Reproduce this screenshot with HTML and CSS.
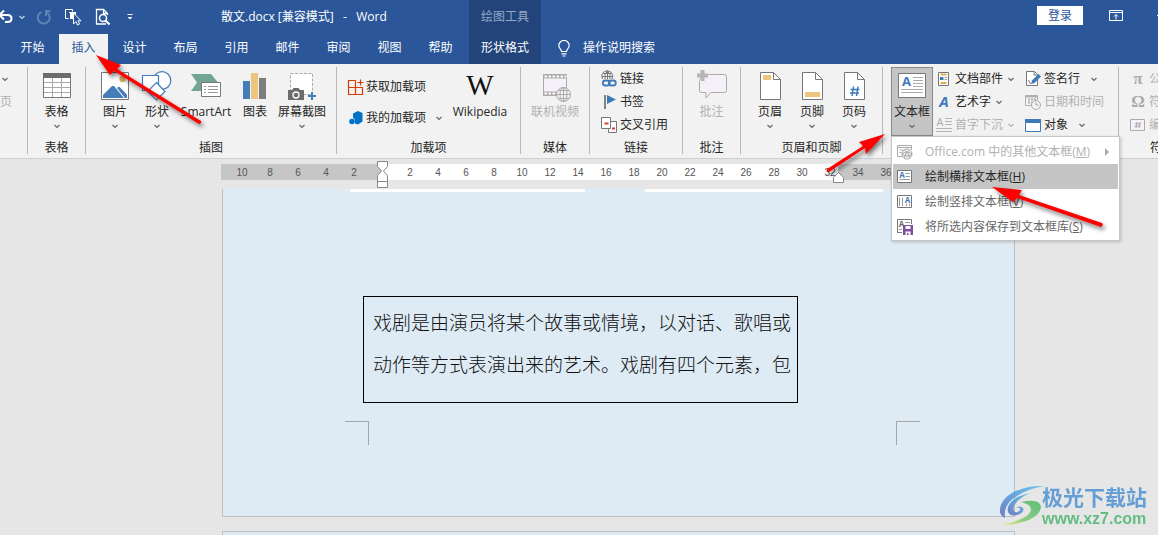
FILE: index.html
```html
<!DOCTYPE html>
<html lang="zh-CN">
<head>
<meta charset="utf-8">
<title>散文.docx - Word</title>
<link rel="stylesheet" href="styles.css">
</head>
<body>
<svg class="defs" aria-hidden="true">
  <symbol id="chev" viewBox="0 0 12 12"><path d="M3.500 5 6 7.500 8.500 5" fill="none" stroke="currentColor" stroke-width="1.200"/></symbol>
  <symbol id="page" viewBox="0 0 34 34"><path d="M7.500 2.500h13l7 7v20h-20z" fill="#fff" stroke="#777"/><path d="M20.500 2.500v7h7" fill="none" stroke="#777"/></symbol>
</svg>
<header class="header">
  <div class="titlebar">
    <div class="quick">
      <button class="qbtn" aria-label="撤消"><svg width="14" height="18" viewBox="0 0 14 18"><path d="M0 7h7.500q4 0 4 3.500T7 14H5M4 2.500-.5 7 4 11.500" fill="none" stroke="#fff" stroke-width="2"/></svg></button>
      <button class="qbtn q-drop" aria-label="撤消选项"><svg class="chev"><use href="#chev"/></svg></button>
      <button class="qbtn q-redo" aria-label="重复"><svg width="16" height="18" viewBox="0 0 16 18"><path d="M5.500 4A6 6 0 1 0 11 4.500M10 8V3h4.500" fill="none" stroke="#5f80b5" stroke-width="2"/></svg></button>
      <button class="qbtn q-select" aria-label="选择对象"><svg width="18" height="18" viewBox="0 0 18 18"><path d="M1.500 10.500v-9h7v2M1.500 10.500h3M5 4.500h7" fill="none" stroke="#fff"/><path d="M6 4h6v3l-3-2v6H6z" fill="#fff"/><path d="M9.500 5v11l2.500-2.500 1.500 3.500 2-1-1.500-3.200h3z" fill="#2b579a" stroke="#fff"/></svg></button>
      <button class="qbtn q-preview" aria-label="打印预览"><svg width="16" height="18" viewBox="0 0 16 18"><path d="M11 16H1.500V1.500h7l4 4V7M8.500 1.500v4h4" fill="none" stroke="#fff" stroke-width="1.300"/><circle cx="8" cy="10" r="3.500" fill="#2b579a" stroke="#fff" stroke-width="1.500"/><path d="m10.500 12.500 4 4" stroke="#fff" stroke-width="2.200"/></svg></button>
      <button class="qbtn q-more" aria-label="自定义快速访问工具栏"><svg width="8" height="8" viewBox="0 0 8 8"><path d="M1.500 1.500h5" stroke="#fff"/><path d="M1.500 4h5L4 6.500z" fill="#fff"/></svg></button>
    </div>
    <h1 class="title">散文.docx [兼容模式]&nbsp;&nbsp; -&nbsp;&nbsp; Word</h1>
  </div>
  <div class="context"><span class="context-name">绘图工具</span><button class="context-tab">形状格式</button></div>
  <div class="account">
    <button class="login">登录</button>
    <button class="qbtn" aria-label="功能区显示选项"><svg width="14" height="12" viewBox="0 0 14 12"><path d="M.5.500h13v10H.5zM.5 2.500h13M7 9.500v-5M5 6.500l2-2 2 2" fill="none" stroke="#fff"/></svg></button>
    <span class="minimise"></span>
  </div>
  <nav class="tabs">
    <button class="tab">开始</button><button class="tab active">插入</button><button class="tab">设计</button><button class="tab">布局</button><button class="tab">引用</button><button class="tab">邮件</button><button class="tab">审阅</button><button class="tab">视图</button><button class="tab">帮助</button>
  </nav>
  <button class="tell"><svg width="12" height="17" viewBox="0 0 12 17"><path d="M3.500 11.500C3.500 9 .8 8.500.8 5.500a5.200 5 0 0 1 10.400 0c0 3-2.700 3.500-2.700 6zM3.500 13.800h5M4.500 16h3" fill="none" stroke="#fff" stroke-width="1.200"/></svg>操作说明搜索</button>
</header>

<section class="ribbon">
  <div class="group g-pages">
    <div class="body col">
      <button class="row" aria-label="封面"><svg class="chev"><use href="#chev"/></svg></button>
      <button class="row off">页</button>
    </div>
  </div>
  <div class="group g-table">
    <div class="body center">
      <button class="big"><svg class="ico" viewBox="0 0 34 34"><path d="M3.500 3.500h27v24h-27z" fill="#fff" stroke="#777"/><path d="M3 3h28v5H3z" fill="#6d6d6d"/><path d="M12.500 8v19M21.500 8v19M4 12.500h26M4 17.500h26M4 22.500h26" stroke="#aaa"/></svg>表格<svg class="chev"><use href="#chev"/></svg></button>
    </div>
    <div class="name">表格</div>
  </div>
  <div class="group g-illus">
    <div class="body">
      <button class="big"><svg class="ico" viewBox="0 0 34 34"><path d="M3.500 2.500h27v27h-27z" fill="#fff" stroke="#777"/><circle cx="24.500" cy="9" r="3.200" fill="#dcb262"/><path d="M5 28v-3l9-9h2l10 12z" fill="#447db8"/><path d="m19 18 2-1.500 8 8V28h-2z" fill="#447db8"/></svg>图片<svg class="chev"><use href="#chev"/></svg></button>
      <button class="big"><svg class="ico" viewBox="0 0 34 34" fill="#fff" stroke="#447db8" stroke-width="1.200"><circle cx="22" cy="10.500" r="8.800"/><path d="M2.500 5.500h16v15h-16z"/><path d="m16.500 12.500 8.500 9-8.500 8.500-9-8.500z"/></svg>形状<svg class="chev"><use href="#chev"/></svg></button>
      <button class="big wide"><svg class="ico" viewBox="0 0 34 34"><path d="M2 4h20l7 8.500-7 8.500H2l6-8.500z" fill="#72a692"/><path d="M12.500 12.500h19v14h-19z" fill="#fff" stroke="#777"/><path d="M15 16.500h2m2 0h10M15 19.500h2m2 0h10M15 22.500h2m2 0h10" stroke="#999"/></svg>SmartArt</button>
      <button class="big"><svg class="ico" viewBox="0 0 34 34"><path d="M5 11h7v18H5z" fill="#447db8"/><path d="M13 3h7v26h-7z" fill="#ecc67c"/><path d="M21 8h7v21h-7z" fill="#7d7d7d"/></svg>图表</button>
      <button class="big w52"><svg class="ico" viewBox="0 0 34 34"><path d="M5.500 3.500h22v21h-22z" fill="#fff" stroke="#aaa" stroke-dasharray="3 1.500"/><path d="M3 20h4l1.500-2h5l1.500 2h4v10H3z" fill="#6d6d6d"/><circle cx="11" cy="25" r="3" fill="#6d6d6d" stroke="#fff" stroke-width="1.300"/><path d="M27 22v8m-4-4h8" stroke="#447db8" stroke-width="2"/></svg>屏幕截图<svg class="chev"><use href="#chev"/></svg></button>
    </div>
    <div class="name">插图</div>
  </div>
  <div class="group g-addins">
    <div class="body">
      <div class="col addin-col">
        <button class="row tall"><svg class="sm" viewBox="0 0 16 16"><path d="M7.500 1.500h-7v14h14v-7H.5M7.500 1.500v14M12.500.5v6m-3-3h6" fill="none" stroke="#d83b01" stroke-width="1.200"/></svg>获取加载项</button>
        <button class="row tall far"><svg class="sm" viewBox="0 0 16 16"><path d="m10 1 4.500 2v8.500L10 14.500l-3-1V10L5 7.500V3.500z" fill="#0072c6"/><circle cx="4" cy="11.500" r="2.800" fill="#0072c6"/></svg>我的加载项<svg class="chev"><use href="#chev"/></svg></button>
      </div>
      <button class="big w60"><svg class="ico" viewBox="0 0 34 34"><text x="17" y="25" text-anchor="middle" class="wiki">W</text></svg>Wikipedia</button>
    </div>
    <div class="name">加载项</div>
  </div>
  <div class="group g-media">
    <div class="body center">
      <button class="big w52 off"><svg class="ico" viewBox="0 0 34 34"><path d="M5.500 4.500h23v21h-23z" fill="#f6f0f8" stroke="#aaa"/><path d="M5 6.500h24M5 23.500h24" stroke="#aaa" stroke-width="4"/><path d="M6.500 6.500h22M6.500 23.500h22" stroke="#fff" stroke-width="2" stroke-dasharray="2.500 1.500"/><circle cx="25.500" cy="24.500" r="7" fill="#f6f0f8" stroke="#aaa"/><path d="M18.500 24.500h14M25.500 17.500v14M20 20.500h11M20 28.500h11" stroke="#aaa"/><ellipse cx="25.500" cy="24.500" rx="3.500" ry="7" fill="none" stroke="#aaa"/></svg>联机视频</button>
    </div>
    <div class="name">媒体</div>
  </div>
  <div class="group g-links">
    <div class="body col">
      <button class="row"><svg class="sm" viewBox="0 0 16 16"><path d="M1.500 8a5.500 5.500 0 1 1 9.500 0M6.500 0v8M1 5.500h11M2.500 2.500h8M4 8Q3 3 6.500 0 10 3 9 8" fill="none" stroke="#777"/><rect x="1.800" y="9.500" width="7" height="5" rx="2.500" fill="none" stroke="#3f7ab8" stroke-width="1.800"/><rect x="7.800" y="9.500" width="7" height="5" rx="2.500" fill="none" stroke="#3f7ab8" stroke-width="1.800"/></svg>链接</button>
      <button class="row"><svg class="sm" viewBox="0 0 16 16"><path d="M4 1v14" stroke="#777" stroke-width="1.800"/><path d="m6 1 9 4.500L6 10z" fill="#3f7ab8"/></svg>书签</button>
      <button class="row"><svg class="sm" viewBox="0 0 16 16"><path d="M7.500 4.500h8v11h-8z" fill="#fff" stroke="#777"/><path d="M.5.500h9v11h-9z" fill="#fff" stroke="#777"/><path d="M3.500 6.500h4M11 11.500h3" stroke="#d24726" stroke-width="2"/></svg>交叉引用</button>
    </div>
    <div class="name">链接</div>
  </div>
  <div class="group g-comment">
    <div class="body center">
      <button class="big off"><svg class="ico" viewBox="0 0 34 34"><path d="M6.500 4.500h23q2 0 2 2v14q0 2-2 2H16l-5 5.500v-5.500H6.500q-2 0-2-2v-14q0-2 2-2z" fill="#f6f0f8" stroke="#aaa"/><path d="M7.500-.5v12m-6-6h12" stroke="#f2f2f2" stroke-width="6"/><path d="M7.500 0v11M2 5.500h11" stroke="#b5b5b5" stroke-width="4"/></svg>批注</button>
    </div>
    <div class="name">批注</div>
  </div>
  <div class="group g-hf">
    <div class="body">
      <button class="big"><svg class="ico" viewBox="0 0 34 34"><use href="#page" width="34" height="34"/><path d="M10 5h8v5h-8z" fill="#ecc67c"/></svg>页眉<svg class="chev"><use href="#chev"/></svg></button>
      <button class="big"><svg class="ico" viewBox="0 0 34 34"><use href="#page" width="34" height="34"/><path d="M10 22h15v5H10z" fill="#ecc67c"/></svg>页脚<svg class="chev"><use href="#chev"/></svg></button>
      <button class="big"><svg class="ico" viewBox="0 0 34 34"><use href="#page" width="34" height="34"/><path d="m16.500 16.500-1.500 9.500m6-9.500L19.500 26m-6-6.500h9m-9.500 3.500h9" fill="none" stroke="#3f7ab8" stroke-width="1.500"/></svg>页码<svg class="chev"><use href="#chev"/></svg></button>
    </div>
    <div class="name">页眉和页脚</div>
  </div>
  <div class="group g-text">
    <div class="body">
      <div class="drop">
        <button class="big pressed" aria-expanded="true"><svg class="ico" viewBox="0 0 34 34"><path d="M3.500 3.500h27v24h-27z" fill="#fff" stroke="#777"/><text x="11.500" y="16" text-anchor="middle" class="glyph-a">A</text><path d="M18 7.500h10M18 10.500h10M18 13.500h10M18 16.500h10M6 19.500h22M6 22.500h22" stroke="#aaa"/></svg>文本框<svg class="chev"><use href="#chev"/></svg></button>
        <div class="menu">
          <button class="item off"><svg class="sm" viewBox="0 0 16 16"><path d="M14.500 6V1.500H.5v11H5M.5 3.500h14M2.500 6h4M2.500 8.500h2" fill="none" stroke="#aaa"/><circle cx="10" cy="10" r="5" fill="#f3eef5" stroke="#aaa"/><path d="M5 10q5-4 10 0-5 4-10 0M7.500 6q5 3 5 8M12.500 6q-5 3-5 8" fill="none" stroke="#aaa"/></svg><span>Office.com 中的其他文本框(<u>M</u>)</span><svg class="more" viewBox="0 0 6 8"><path d="m1 0 4 4-4 4z" fill="#aaa"/></svg></button>
          <button class="item hot"><svg class="sm" viewBox="0 0 16 16"><path d="M.5 1.500h14v12H.5z" fill="#fff" stroke="#777"/><text x="5" y="9" text-anchor="middle" class="tiny-a">A</text><path d="M8.500 4.500H13M8.500 7.500H13M2.500 10.500H13" stroke="#999"/></svg><span>绘制横排文本框(<u>H</u>)</span></button>
          <button class="item"><svg class="sm" viewBox="0 0 16 16"><path d="M.5 1.500h14v12H.5z" fill="#fff" stroke="#777"/><text x="10.500" y="9" text-anchor="middle" class="tiny-a">A</text><path d="M2.500 3.500V12M5.500 3.500V12M9.500 9.500V12M12.500 9.500V12" stroke="#999"/></svg><span>绘制竖排文本框(<u>V</u>)</span></button>
          <button class="item"><svg class="sm" viewBox="0 0 16 16"><path d="M5 13.500H.5V.5h14V5" fill="#fff" stroke="#777"/><text x="4.500" y="8" text-anchor="middle" class="tiny-a dark">A</text><path d="M8 3.500h5M2 10.500h3" stroke="#999"/><path d="M6 6h10v10H6z" fill="#7e4fa0"/><path d="M8.500 7h5v3h-5zM8.500 12.500h5V16h-2v-2h-1.500v2H8.500z" fill="#fff"/></svg><span>将所选内容保存到文本框库(<u>S</u>)</span></button>
        </div>
      </div>
      <div class="col text-col">
        <button class="row"><svg class="sm" viewBox="0 0 16 16"><path d="M2.500 1.500h10v13h-10z" fill="#fff" stroke="#777"/><path d="M4.500 3.500h6" stroke="#e0ac4c" stroke-width="2"/><path d="M4 6h3.500v3H4z" fill="#3f7ab8"/><path d="M8.500 6.500H11M8.500 8.500H11" stroke="#999"/><path d="M4.500 12h6" stroke="#e0ac4c" stroke-width="2"/></svg>文档部件<svg class="chev"><use href="#chev"/></svg></button>
        <button class="row"><svg class="sm" viewBox="0 0 16 16"><text x="8" y="13" text-anchor="middle" class="art-a">A</text></svg>艺术字<svg class="chev"><use href="#chev"/></svg></button>
        <button class="row off"><svg class="sm" viewBox="0 0 16 16"><text x="4" y="9" text-anchor="middle" class="cap-a">A</text><path d="M9 1.500h7M9 4.500h7M9 7.500h7M0 11.500h16M0 14.500h16" stroke="#b5b5b5"/></svg>首字下沉<svg class="chev"><use href="#chev"/></svg></button>
      </div>
      <div class="col">
        <button class="row far"><svg class="sm" viewBox="0 0 16 16"><path d="M1.500.5h8l3 3v11h-11z" fill="#fff" stroke="#777"/><path d="M9 .5v3.500h3.500" fill="none" stroke="#777"/><path d="m6 13 1-3.500L13.500 3l2.500 2.500-6.500 6.500z" fill="#3f7ab8"/><path d="m3.500 9 2 4" stroke="#777"/></svg>签名行<svg class="chev"><use href="#chev"/></svg></button>
        <button class="row off"><svg class="sm" viewBox="0 0 16 16"><path d="M7 11.500H.5v-10h12V6" fill="none" stroke="#b0b0b0"/><path d="M.5 2.500h12M3 5.500h2m1 0h2m1 0h2M3 8.500h2m1 0h1" stroke="#b0b0b0" stroke-width="2"/><circle cx="11" cy="11" r="4.500" fill="#f6f0f8" stroke="#aaa"/><path d="M11 8v3h2.500" fill="none" stroke="#aaa"/></svg>日期和时间</button>
        <button class="row far"><svg class="sm" viewBox="0 0 16 16"><path d="M.5 2.500h15v12H.5z" fill="#fff" stroke="#3f7ab8"/><path d="M0 2h16v4H0z" fill="#3f7ab8"/></svg>对象<svg class="chev"><use href="#chev"/></svg></button>
      </div>
    </div>
  </div>
  <div class="group g-symbol">
    <div class="body col">
      <button class="row off"><svg class="sm" viewBox="0 0 16 16"><text x="8" y="13" text-anchor="middle" class="sym">π</text></svg>公式</button>
      <button class="row off"><svg class="sm" viewBox="0 0 16 16"><text x="8" y="13" text-anchor="middle" class="sym">Ω</text></svg>符号</button>
      <button class="row off"><svg class="sm" viewBox="0 0 16 16"><path d="M.5 2.500h14v11H.5z" fill="#f6f0f8" stroke="#aaa"/><path d="m7 5-1 6m4-6-1 6M5 6.800h6M4.500 9.200h6" stroke="#aaa"/></svg>编号</button>
    </div>
    <div class="name">符号</div>
  </div>
</section>

<main class="workspace">
  <div class="ruler">
    <div class="margin-left"><span>10</span><span>8</span><span>6</span><span>4</span><span>2</span></div>
    <div class="measure"><span>2</span><span>4</span><span>6</span><span>8</span><span>10</span><span>12</span><span>14</span><span>16</span><span>18</span><span>20</span><span>22</span><span>24</span><span>26</span><span>28</span><span>30</span><span>32</span></div>
    <div class="margin-right"><span>34</span><span>36</span></div>
    <svg class="indent left" viewBox="0 0 12 28"><path d="M.5.500h10v5l-4 4.500 4 4.500v12H.5v-12l4-4.500-4-4.500zM.5 20.500h10" fill="#fff" stroke="#888"/></svg>
    <svg class="indent right" viewBox="0 0 12 12"><path d="M.5 10.500v-5l5-5 5 5v5z" fill="#fff" stroke="#888"/></svg>
  </div>
  <article class="sheet">
    <div class="strips"><i class="strip s1"></i><i class="strip s2"></i></div>
    <div class="textbox"><p>戏剧是由演员将某个故事或情境，以对话、歌唱或</p><p>动作等方式表演出来的艺术。戏剧有四个元素，包</p></div>
    <div class="corners"><i class="corner cl"></i><i class="corner cr"></i></div>
  </article>
  <div class="sheet next"></div>
</main>

<div class="brand">
  <svg class="brand-logo" viewBox="0 0 46 42">
    <defs>
      <linearGradient id="b1" x1="1" y1="0" x2="0" y2="1"><stop offset="0" stop-color="#56c2ea"/><stop offset=".5" stop-color="#5b9fdc"/><stop offset="1" stop-color="#6674bd"/></linearGradient>
      <linearGradient id="b2" x1="1" y1="0" x2="0" y2="1"><stop offset="0" stop-color="#52b86c"/><stop offset=".6" stop-color="#82ca79"/><stop offset="1" stop-color="#f0e860"/></linearGradient>
    </defs>
    <path d="M45 1C24 0 3 9 1 24q-1 6 5 9-2-14 12-22Q28 4 45 1z" fill="url(#b1)"/>
    <path d="M33 8C16 10 7 19 9 27q3 6 12 2 5-3 3-6-3-3-7 0 5-1 4 2-3 4-6 1-2-6 6-12Q27 9 33 8z" fill="url(#b1)"/>
    <path d="M22 17q19-4 20 5c-1 11-18 17-38 18 16-4 27-9 28-15 0-5-4-6-10-8z" fill="url(#b2)"/>
  </svg>
  <div class="brand-text"><strong>极光下载站</strong><a href="#">www.xz7.com</a></div>
</div>
<svg class="arrows" viewBox="0 0 1158 535" aria-hidden="true">
  <path d="m96 55 25 10-4 4 84 52q1 2-2 3l-85-53-4 4z"/>
  <path d="m885 134-19 20-1-6-36 24q-3 0-2-3l36-23-4-4z"/>
  <path d="m992 187 30 3-3 5 83 28q2 2-1 4l-84-29-4 4z"/>
</svg>
</body>
</html>
```
FILE: styles.css
```css
* { box-sizing: border-box; }
body {
  margin: 0;
  height: 100vh;
  position: relative;
  display: flex;
  flex-direction: column;
  overflow: hidden;
  background: #e6e6e6;
  color: #262626;
  font: 12px/16px "Open Sans", "Noto Sans CJK SC", sans-serif;
}
button {
  margin: 0;
  padding: 0;
  border: 0;
  background: none;
  color: inherit;
  font: inherit;
  white-space: nowrap;
}
.defs { position: absolute; width: 0; height: 0; }
.chev { flex: none; width: 12px; height: 12px; color: #666; }

/* title bar and tabs */
.header {
  flex: none;
  display: grid;
  grid-template-columns: auto auto 1fr;
  grid-template-rows: 34px 30px;
  background: #2b579a;
  color: #fff;
}
.titlebar { display: flex; align-items: center; }
.quick { display: flex; align-items: center; width: 221px; }
.qbtn { display: flex; flex: none; }
.q-drop { margin-left: 2px; }
.q-drop .chev { color: #c5d2e6; }
.q-redo { margin-left: 8px; }
.q-select { margin-left: 12px; }
.q-preview { margin-left: 13px; }
.q-more { margin-left: 15px; }
.title { margin: 0; font-size: 12px; font-weight: 400; white-space: nowrap; }
.context {
  grid-row: 1 / 3;
  grid-column: 2;
  display: grid;
  grid-template-rows: 34px 30px;
  padding: 0 12px;
  background: #22447a;
  place-items: center;
}
.context-name { color: #94a8c8; }
.account { display: flex; align-items: center; justify-content: flex-end; gap: 26px; padding-bottom: 3px; }
.login { width: 46px; height: 19px; background: #fff; color: #2b579a; }
.minimise { width: 1px; height: 1px; background: #fff; margin-left: 8px; }
.tabs { grid-row: 2; grid-column: 1; display: flex; gap: 2px; padding: 0 4px 0 8px; }
.tab { width: 49px; height: 30px; padding-bottom: 2px; }
.tab.active { background: #f2f2f2; color: #2b579a; }
.context-tab { padding-bottom: 2px; }
.tell { grid-row: 2; grid-column: 3; display: flex; align-items: center; gap: 13px; padding: 0 0 2px 17px; justify-self: start; }

/* ribbon */
.ribbon {
  flex: none;
  display: flex;
  padding: 3px 0 4px;
  background: #f2f2f2;
  border-bottom: 1px solid #d0d0d0;
}
.group {
  flex: none;
  height: 87px;
  display: flex;
  flex-direction: column;
  justify-content: space-between;
  border-right: 1px solid #b8b8b8;
}
.body { display: flex; align-items: flex-start; }
.center { justify-content: center; }
.col { display: flex; flex-direction: column; align-items: flex-start; }
.name { text-align: center; white-space: nowrap; line-height: 12px; }
.g-pages { width: 28px; }
.g-table, .g-comment { width: 58px; }
.g-illus { width: 251px; }
.g-illus .body, .g-hf .body { padding-left: 8px; }
.g-addins { width: 184px; }
.g-addins .body { padding-left: 11px; gap: 2px; }
.addin-col { width: 100px; padding-top: 4px; }
.g-media { width: 69px; }
.g-links { width: 93px; }
.g-links .body { padding-left: 11px; }
.g-hf { width: 142px; }
.g-text { width: 236px; }
.g-text .body { padding-left: 8px; gap: 3px; }
.text-col { width: 86px; }
.g-symbol { border: 0; width: 86px; }
.g-symbol .body { padding-left: 11px; }
.big {
  width: 42px;
  height: 69px;
  padding-top: 3px;
  display: flex;
  flex-direction: column;
  align-items: center;
}
.big.w52 { width: 52px; }
.big.wide { width: 56px; }
.big.w60 { width: 60px; }
.ico { flex: none; width: 34px; height: 34px; }
.pressed { background: #c5c5c5; outline: 1px solid #888; outline-offset: -1px; }
.row { height: 23px; display: flex; align-items: center; gap: 3px; }
.row .chev { margin-left: -1px; }
.row.tall { height: 31px; gap: 2px; }
.row.far .chev { margin-left: 5px; }
.sm { flex: none; width: 16px; height: 16px; overflow: visible; }
.off, .off .chev { color: #b1b1b1; }
.wiki { font: 29px "Liberation Serif", serif; fill: #111; }
.glyph-a { font: bold 13px "Open Sans", sans-serif; fill: #3f7ab8; }
.tiny-a { font: bold 8px "Open Sans", sans-serif; fill: #3f7ab8; }
.tiny-a.dark { fill: #666; }
.art-a { font: italic bold 15px "Open Sans", sans-serif; fill: #3f7ab8; }
.cap-a { font: 11px "Open Sans", sans-serif; fill: #aaa; }
.sym { font: bold 17px "Liberation Serif", serif; fill: #aaa; }

/* drop-down menu */
.drop { position: relative; }
.menu {
  position: absolute;
  z-index: 3;
  top: 100%;
  left: 0;
  width: 229px;
  padding: 2px 1px 1px;
  background: #fff;
  border: 1px solid #c6c6c6;
  box-shadow: 1px 1px 3px rgba(0, 0, 0, .2);
}
.item { width: 100%; height: 25px; padding: 0 8px 0 4px; display: flex; align-items: center; gap: 12px; color: #666; }
.item.off { color: #b1b1b1; }
.item.hot { background: #c5c5c5; color: #262626; }
.more { width: 6px; height: 8px; margin-left: auto; }

/* ruler and pages */
.workspace { flex: 1; min-height: 0; display: flex; flex-direction: column; padding: 5px 0 0 221px; }
.ruler {
  position: relative;
  flex: none;
  display: flex;
  width: 794px;
  height: 16px;
  margin-bottom: 9px;
  background: #c6c6c6;
  color: #555;
  font: 10px/17px "Liberation Sans", sans-serif;
}
.ruler span { display: inline-block; width: 28px; text-align: center; }
.ruler div { white-space: nowrap; font-size: 0; }
.ruler span { font-size: 10px; }
.margin-left { width: 161px; padding-left: 7px; }
.measure { width: 456px; padding-left: 14px; background: #fff; }
.margin-right { padding-left: 6px; }
.indent { position: absolute; }
.indent.left { left: 156px; top: -3px; width: 12px; height: 28px; }
.indent.right { left: 612px; top: 8px; width: 12px; height: 12px; }
.sheet {
  flex: none;
  width: 793px;
  margin-left: 1px;
  background: #deebf5;
  border: 1px solid #c0c0c0;
  border-top: 0;
  padding-bottom: 71px;
}
.strips { display: flex; gap: 60px; padding-left: 127px; }
.strip { height: 3px; background: #fff; }
.s1 { width: 235px; }
.s2 { width: 238px; }
.textbox {
  width: 435px;
  height: 107px;
  margin: 104px 0 18px 140px;
  padding: 4px 9px;
  border: 1px solid #000;
  color: #111;
  font: 300 19px/42px "Noto Sans CJK SC", sans-serif;
  white-space: nowrap;
}
.textbox p { margin: 0; }
.corners { display: flex; justify-content: space-between; padding: 0 94px 0 122px; }
.corner { width: 24px; height: 24px; border-top: 1px solid #a6a6a6; }
.cl { border-right: 1px solid #a6a6a6; }
.cr { border-left: 1px solid #a6a6a6; }
.next { flex: 1; margin-top: 14px; padding: 0; border: 1px solid #c0c0c0; border-bottom: 0; }

/* overlays */
.brand { position: absolute; right: 11px; bottom: 7px; display: flex; align-items: center; opacity: .9; }
.brand-logo { width: 46px; height: 42px; }
.brand-text { display: flex; flex-direction: column; margin-left: -3px; }
.brand-text strong { color: #5797d3; font: bold 21px/24px "Noto Sans CJK SC", sans-serif; padding-bottom: 2px; }
.brand-text a { color: #56b878; font: bold 16px/18px "Liberation Sans", sans-serif; text-decoration: none; }
.arrows {
  position: absolute;
  z-index: 4;
  top: 0;
  left: 0;
  width: 1158px;
  height: 535px;
  pointer-events: none;
  fill: #f00;
  filter: drop-shadow(2px 3px 2px rgba(0, 0, 0, .5));
}
```
